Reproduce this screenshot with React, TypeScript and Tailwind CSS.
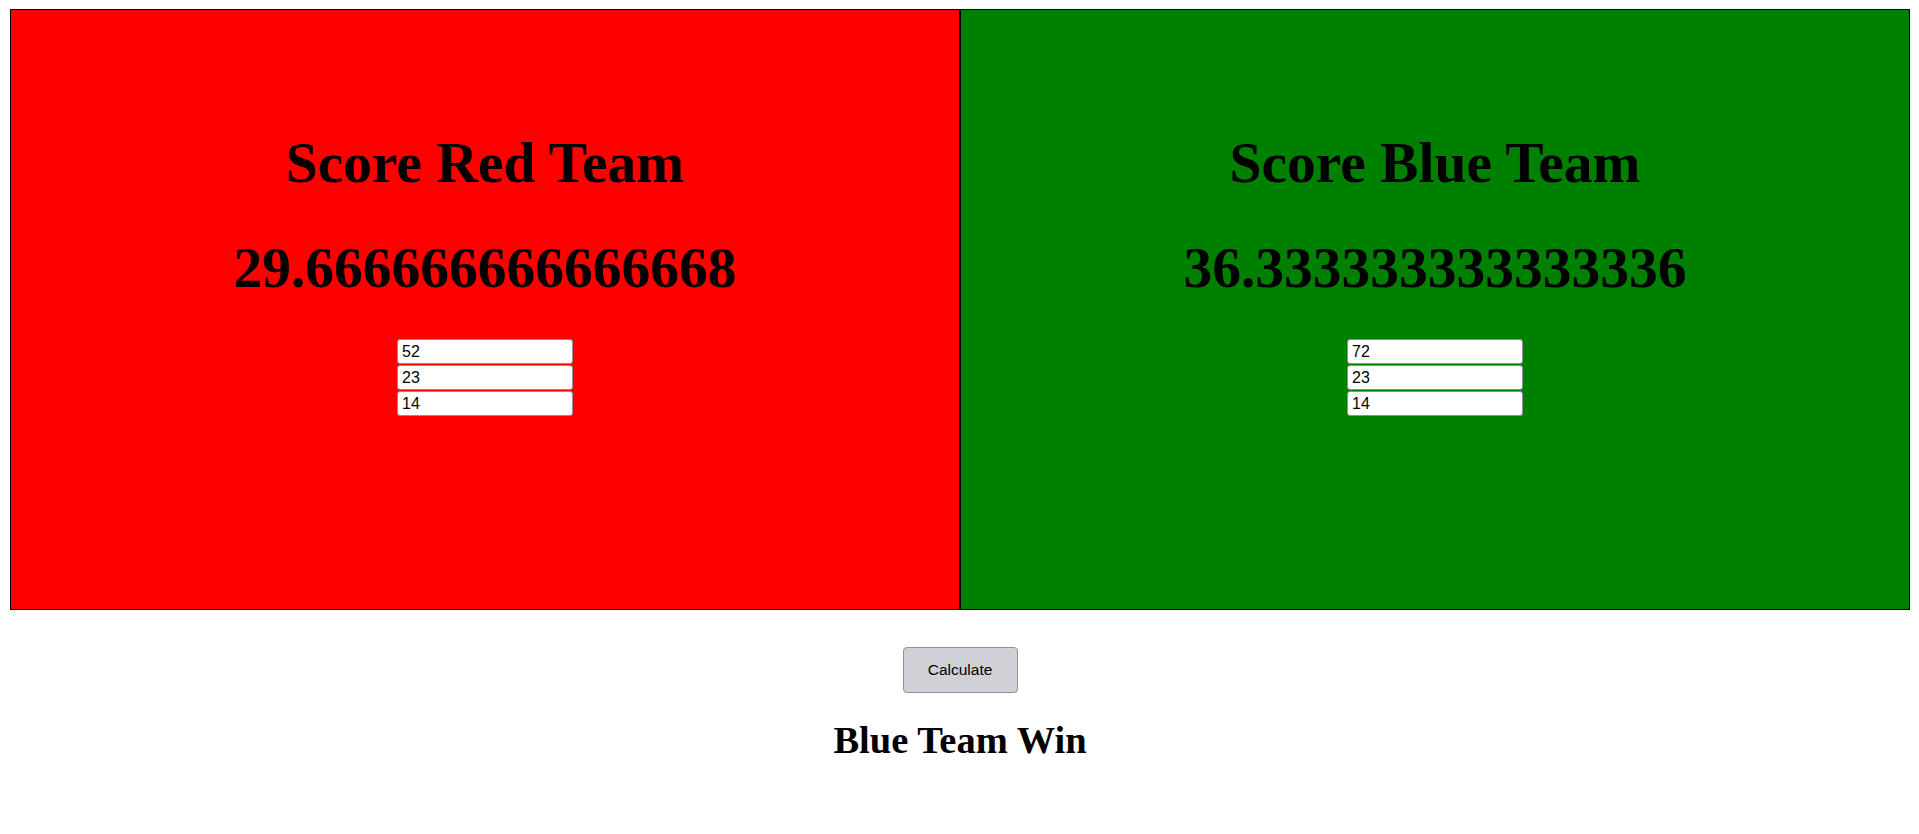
import { useState } from 'react';

const avg = (vals: string[]) => vals.reduce((s, v) => s + Number(v), 0) / vals.length;

function TeamPanel({ name, color, values, onChange, score }: {
  name: string;
  color: string;
  values: string[];
  onChange: (i: number, v: string) => void;
  score: number;
}) {
  return (
    <div className={`flex-1 h-[601px] border border-black flex flex-col items-center pt-[120px] ${color}`}>
      <h1 className="font-['Liberation_Serif',serif] font-bold text-[57.5px] leading-[66px] text-black">Score {name} Team</h1>
      <h1 className="mt-[39px] font-['Liberation_Serif',serif] font-bold text-[57.5px] leading-[66px] text-black">{score}</h1>
      <div className="mt-[38px] flex flex-col gap-[1px]">
        {values.map((v, i) => (
          <input
            key={i}
            type="text"
            value={v}
            onChange={(e) => onChange(i, e.target.value)}
            className="w-[176px] h-[25px] bg-white border-[1.5px] border-[#8f8f9d] rounded-[3px] px-[4px] font-['Liberation_Sans',sans-serif] text-[16px] text-black outline-none"
          />
        ))}
      </div>
    </div>
  );
}

export default function App() {
  const [red, setRed] = useState(['52', '23', '14']);
  const [blue, setBlue] = useState(['72', '23', '14']);
  const [scores, setScores] = useState({ red: avg(red), blue: avg(blue) });

  const winner = scores.red > scores.blue ? 'Red Team Win' : scores.blue > scores.red ? 'Blue Team Win' : 'Draw';

  return (
    <div className="min-h-screen bg-white pt-[9px] pl-[10px] pr-[9px]">
      <div className="flex">
        <TeamPanel
          name="Red"
          color="bg-[#ff0000]"
          values={red}
          score={scores.red}
          onChange={(i, v) => setRed(red.map((x, j) => (j === i ? v : x)))}
        />
        <TeamPanel
          name="Blue"
          color="bg-[#008000]"
          values={blue}
          score={scores.blue}
          onChange={(i, v) => setBlue(blue.map((x, j) => (j === i ? v : x)))}
        />
      </div>
      <div className="flex flex-col items-center">
        <button
          onClick={() => setScores({ red: avg(red), blue: avg(blue) })}
          className="mt-[37px] w-[115px] h-[46px] bg-[#d0d0d7] border border-[#8f8f9d] rounded-[4px] font-['Liberation_Sans',sans-serif] text-[15.5px] text-black"
        >
          Calculate
        </button>
        <h2 className="mt-[25px] font-['Liberation_Serif',serif] font-bold text-[38.5px] leading-[44px] text-black">{winner}</h2>
      </div>
    </div>
  );
}
